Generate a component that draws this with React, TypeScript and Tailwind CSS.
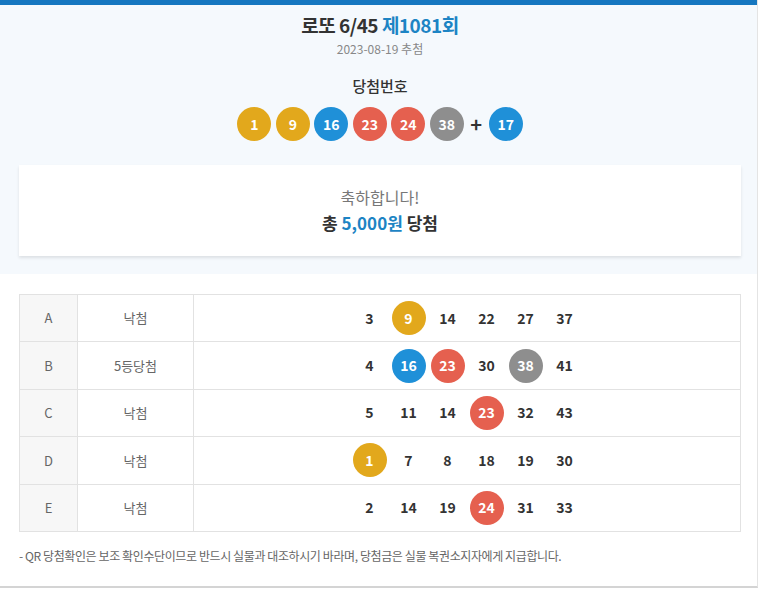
const BALL_COLOR: Record<string, string> = {
  yellow: 'bg-[#e2a81c]',
  blue: 'bg-[#1f90d8]',
  red: 'bg-[#e5604f]',
  gray: 'bg-[#8e8e8e]',
};

function colorOf(n: number) {
  if (n <= 10) return 'yellow';
  if (n <= 20) return 'blue';
  if (n <= 30) return 'red';
  return 'gray';
}

function Ball({ n }: { n: number }) {
  return (
    <span
      className={`flex h-[34px] w-[34px] items-center justify-center rounded-full text-[14px] font-bold text-white ${BALL_COLOR[colorOf(n)]}`}
    >
      {n}
    </span>
  );
}

const WIN = [1, 9, 16, 23, 24, 38];
const BONUS = 17;

const ROWS: { label: string; result: string; nums: number[] }[] = [
  { label: 'A', result: '낙첨', nums: [3, 9, 14, 22, 27, 37] },
  { label: 'B', result: '5등당첨', nums: [4, 16, 23, 30, 38, 41] },
  { label: 'C', result: '낙첨', nums: [5, 11, 14, 23, 32, 43] },
  { label: 'D', result: '낙첨', nums: [1, 7, 8, 18, 19, 30] },
  { label: 'E', result: '낙첨', nums: [2, 14, 19, 24, 31, 33] },
];

export default function App() {
  return (
    <div
      className="h-[590px] w-[759px] overflow-hidden bg-white text-[#333]"
      style={{ fontFamily: '"Noto Sans CJK KR", "Noto Sans", sans-serif' }}
    >
      <div className="h-[588px] w-[758px] border-r border-b-2 border-r-[#e4e4e4] border-b-[#d4d4d4]">
        <div className="h-[5px] bg-[#1677c0]" />

        <div className="bg-[#f5f9fd] pr-[16px] pb-[18px] pl-[19px]">
          <h1 className="pt-[6px] text-center text-[19px] leading-[28px] font-bold tracking-[-0.5px]">
            로또 6/45 <span className="text-[#1d84c4]">제1081회</span>
          </h1>
          <p className="mt-[1px] text-center text-[12px] leading-[18px] text-[#888]">2023-08-19 추첨</p>

          <p className="mt-[18px] text-center text-[15px] leading-[20px] font-medium">당첨번호</p>
          <div className="mt-[11px] flex items-center justify-center gap-[4.5px]">
            {WIN.map((n) => (
              <Ball key={n} n={n} />
            ))}
            <span className="mx-[2px] text-[20px] leading-none font-bold text-[#333]">+</span>
            <Ball n={BONUS} />
          </div>

          <div className="mt-[24px] flex h-[91px] flex-col items-center justify-center bg-white shadow-[0_2px_3px_rgba(0,0,0,0.1)]">
            <p className="text-[16px] leading-[22px] text-[#777]">축하합니다!</p>
            <p className="mt-[3px] text-[17px] leading-[24px] font-bold">
              총 <span className="text-[#1d84c4]">5,000원</span> 당첨
            </p>
          </div>
        </div>

        <div className="pt-[20px] pr-[16px] pl-[19px]">
          <table className="w-full border-collapse border border-[#e2e2e2]">
            <tbody>
              {ROWS.map((row) => (
                <tr key={row.label} className="h-[47.4px] border-b border-[#e2e2e2]">
                  <td className="w-[58px] border-r border-[#e2e2e2] bg-[#f7f7f7] text-center text-[13px] text-[#666]">
                    {row.label}
                  </td>
                  <td className="w-[116px] border-r border-[#e2e2e2] text-center text-[13px] text-[#666]">
                    {row.result}
                  </td>
                  <td>
                    <div className="flex items-center justify-center gap-[5px]">
                      {row.nums.map((n) =>
                        WIN.includes(n) ? (
                          <Ball key={n} n={n} />
                        ) : (
                          <span key={n} className="w-[34px] text-center text-[14px] font-bold text-[#333]">
                            {n}
                          </span>
                        ),
                      )}
                    </div>
                  </td>
                </tr>
              ))}
            </tbody>
          </table>

          <p className="mt-[14px] text-[12px] leading-[20px] tracking-[-0.4px] text-[#666]">
            - QR 당첨확인은 보조 확인수단이므로 반드시 실물과 대조하시기 바라며, 당첨금은 실물 복권소지자에게 지급합니다.
          </p>
        </div>
      </div>
    </div>
  );
}
